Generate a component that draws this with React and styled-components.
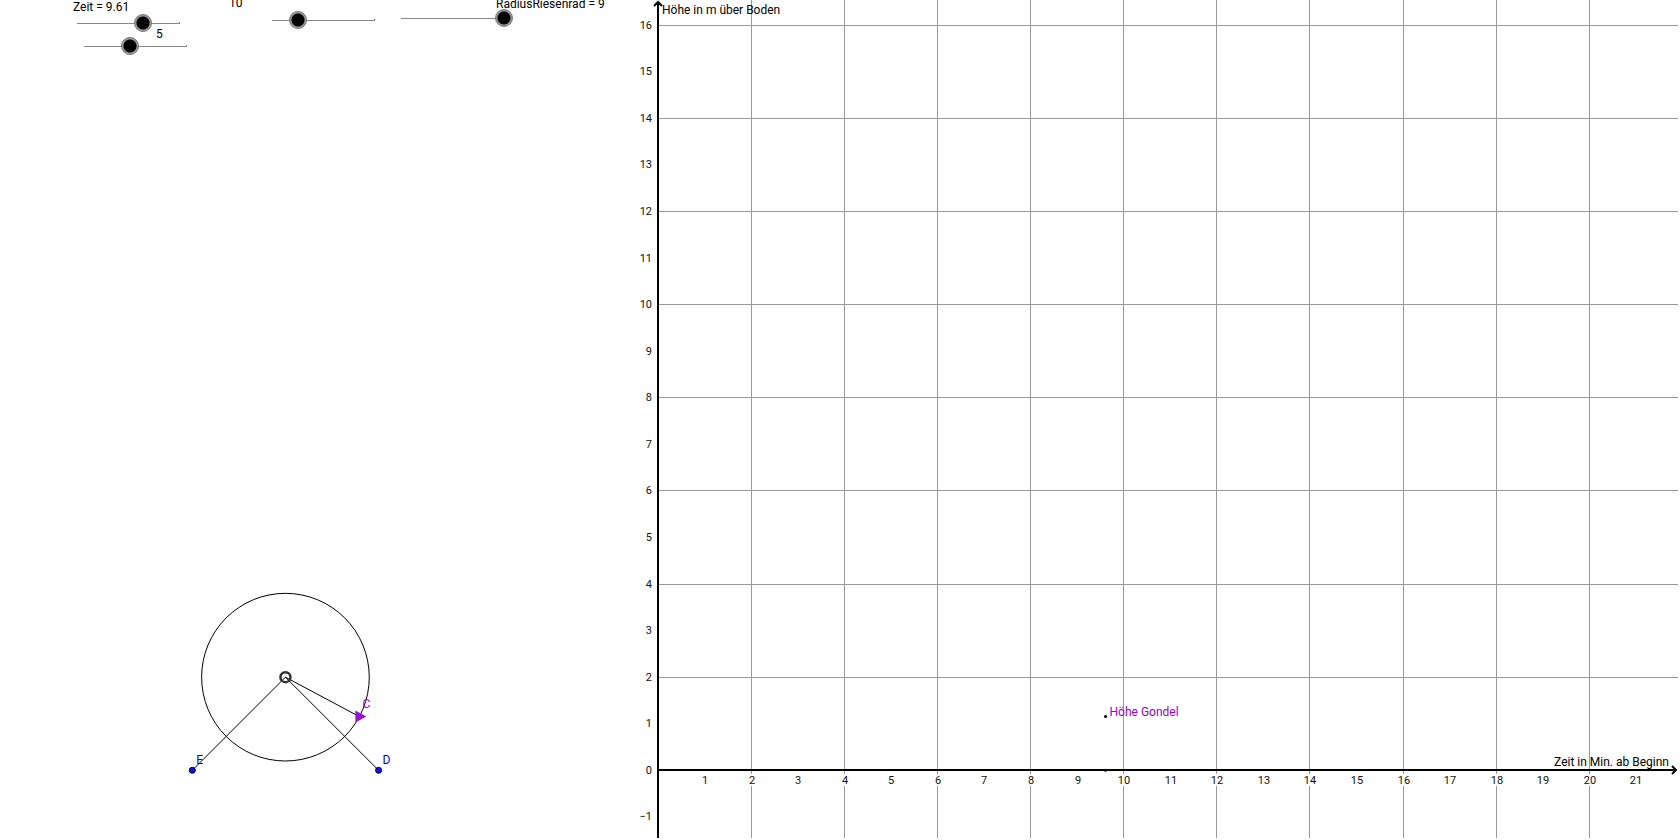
import { useEffect, useId, useState } from "react";
import styled, { createGlobalStyle } from "styled-components";

const UNIT = 46.57;
const ORIGIN = { x: 658, y: 770 };
const EDGE = 2;

const toX = (x) => ORIGIN.x + x * UNIT;
const toY = (y) => ORIGIN.y + 0.3 - y * UNIT;
const crisp = (v) => Math.floor(v) + 0.5;

const range = (from, to) =>
  Array.from({ length: Math.max(0, to - from + 1) }, (_, i) => from + i);

const useWindowSize = () => {
  const read = () => ({ width: window.innerWidth, height: window.innerHeight });
  const [size, setSize] = useState(read);

  useEffect(() => {
    const onResize = () => setSize(read());
    window.addEventListener("resize", onResize);
    return () => window.removeEventListener("resize", onResize);
  }, []);

  return size;
};

const GlobalStyle = createGlobalStyle`
  body {
    margin: 0;
    background-color: #fff;
    font-family: Roboto, "Liberation Sans", sans-serif;
  }
`;

const Board = styled.main`
  position: relative;
  height: 100vh;
  overflow: hidden;
`;

const Drawing = styled.svg`
  display: block;
  width: 100%;
  height: 100%;
`;

const GridLine = styled.line`
  stroke: #999;
`;

const AxisLine = styled.path`
  fill: none;
  stroke: #000;
  stroke-width: 2;
`;

const TickGap = styled.rect`
  fill: #fff;
`;

const Tick = styled.text`
  fill: #111;
  font-size: 11px;
`;

const Caption = styled.text`
  fill: ${(p) => p.$color || "#000"};
  font-size: 12px;
`;

const Rim = styled.circle`
  fill: none;
  stroke: #000;
`;

const Beam = styled.line`
  stroke: #000;
`;

const Hub = styled.circle`
  fill: none;
  stroke: #333;
  stroke-width: 2.5;
`;

const Foot = styled.circle`
  fill: #1010ff;
  stroke: #000;
`;

const Gondola = styled.path`
  fill: #9b0fcf;
`;

const TraceDot = styled.circle`
  fill: #000;
`;

const SliderLabel = styled.label`
  position: absolute;
  left: ${(p) => p.$place.x}px;
  top: ${(p) => p.$place.y}px;
  font-size: 12px;
  line-height: 16px;
  white-space: nowrap;
`;

const SliderInput = styled.input`
  position: absolute;
  left: ${(p) => p.$place.x - 9}px;
  top: ${(p) => p.$place.y - 9}px;
  width: 121px;
  height: 19px;
  margin: 0;
  appearance: none;
  background: none;

  &::-webkit-slider-runnable-track {
    height: 19px;
    background:
      linear-gradient(#888, #888) calc(100% - 9px) 8px / 1px 1px no-repeat,
      linear-gradient(#888, #888) center / calc(100% - 18px) 1px no-repeat;
  }

  &::-webkit-slider-thumb {
    appearance: none;
    box-sizing: border-box;
    width: 18px;
    height: 18px;
    border: 1px solid #777;
    border-radius: 50%;
    background: radial-gradient(circle, #000 6px, #999 7px);
  }
`;

const Slider = ({ text, value, onChange, min, max, step, place, labelPlace }) => {
  const id = useId();

  return (
    <>
      <SliderLabel htmlFor={id} $place={labelPlace}>
        {text}
      </SliderLabel>
      <SliderInput
        id={id}
        type="range"
        min={min}
        max={max}
        step={step}
        value={value}
        onChange={(e) => onChange(Number(e.target.value))}
        $place={place}
      />
    </>
  );
};

const Axes = ({ right, bottom }) => {
  const xTicks = range(1, Math.floor((right - 20 - ORIGIN.x) / UNIT));
  const yTicks = range(
    Math.ceil((ORIGIN.y - bottom + 6) / UNIT),
    Math.floor((ORIGIN.y - 10) / UNIT)
  );

  return (
    <g>
      {xTicks
        .filter((n) => n % 2 === 0)
        .map((n) => (
          <GridLine key={n} x1={crisp(toX(n))} x2={crisp(toX(n))} y1={0} y2={bottom} />
        ))}
      {yTicks
        .filter((n) => n % 2 === 0 && n !== 0)
        .map((n) => (
          <GridLine key={n} x1={ORIGIN.x} x2={right} y1={crisp(toY(n))} y2={crisp(toY(n))} />
        ))}

      {xTicks.map((n) => (
        <g key={n}>
          <TickGap x={toX(n) - 7} y={ORIGIN.y + 4} width={15} height={12} />
          <Tick x={Math.floor(toX(n)) + 1} y={ORIGIN.y + 14} textAnchor="middle">
            {n}
          </Tick>
        </g>
      ))}
      {yTicks.map((n) => (
        <Tick key={n} x={ORIGIN.x - 6} y={Math.floor(toY(n)) + 4} textAnchor="end">
          {String(n).replace("-", "−")}
        </Tick>
      ))}

      <AxisLine
        d={`M${ORIGIN.x} ${bottom}V2M${ORIGIN.x - 4} 6L${ORIGIN.x} 2L${ORIGIN.x + 4} 6`}
      />
      <AxisLine
        d={`M${ORIGIN.x} ${ORIGIN.y}H${right - 2}M${right - 6} ${ORIGIN.y - 4}L${right - 2} ${ORIGIN.y}L${right - 6} ${ORIGIN.y + 4}`}
      />

      <Caption x={ORIGIN.x + 4} y={14}>
        Höhe in m über Boden
      </Caption>
      <Caption x={right - 9} y={ORIGIN.y - 4} textAnchor="end">
        Zeit in Min. ab Beginn
      </Caption>
    </g>
  );
};

const Wheel = ({ hub, radius, gondola }) => {
  const center = { x: toX(hub.x), y: toY(hub.y) };
  const seat = { x: toX(gondola.x), y: toY(gondola.y) };
  const feet = [
    { name: "E", x: toX(hub.x - 2), y: toY(0) },
    { name: "D", x: toX(hub.x + 2), y: toY(0) },
  ];

  return (
    <g>
      <Rim cx={center.x} cy={center.y} r={radius * UNIT} />
      {feet.map((foot) => (
        <Beam key={foot.name} x1={center.x} y1={center.y} x2={foot.x} y2={foot.y} />
      ))}
      <Beam x1={center.x} y1={center.y} x2={seat.x} y2={seat.y} />
      <Hub cx={center.x} cy={center.y} r={5} />

      {feet.map((foot) => (
        <g key={foot.name}>
          <Foot cx={foot.x} cy={foot.y} r={3} />
          <Caption x={foot.x + 4} y={foot.y - 6} $color="#0000ff">
            {foot.name}
          </Caption>
        </g>
      ))}

      <Gondola d={`M${seat.x - 4} ${seat.y - 6}l11 6l-11 6z`} />
      <Caption x={seat.x + 3} y={seat.y - 9} $color="#9900cc">
        C
      </Caption>
    </g>
  );
};

const App = () => {
  const { width, height } = useWindowSize();
  const [time, setTime] = useState(9.61);
  const [period, setPeriod] = useState(5);
  const [hubHeight, setHubHeight] = useState(10);
  const [wheelRadius, setWheelRadius] = useState(9);

  // lengths are drawn at a fifth of their size
  const hub = { x: -8, y: hubHeight / 5 };
  const radius = wheelRadius / 5;
  const angle = (2 * Math.PI * time) / period;
  const gondola = {
    x: hub.x + radius * Math.cos(angle),
    y: hub.y + radius * Math.sin(angle),
  };

  return (
    <>
      <GlobalStyle />
      <Board>
        <Drawing>
          <Axes right={width - EDGE} bottom={height - EDGE} />
          <Wheel hub={hub} radius={radius} gondola={gondola} />
          <TraceDot cx={toX(time)} cy={toY(gondola.y)} r={1.5} />
          <TraceDot cx={toX(time)} cy={toY(0)} r={1.5} />
          <Caption x={toX(time) + 4} y={toY(gondola.y) - 1} $color="#9900cc">
            Höhe Gondel
          </Caption>
        </Drawing>

        <Slider
          text={`Zeit = ${time}`}
          value={time}
          onChange={setTime}
          min={0}
          max={15}
          step={0.01}
          place={{ x: 77, y: 23 }}
          labelPlace={{ x: 73, y: -1 }}
        />
        <Slider
          text={period}
          value={period}
          onChange={setPeriod}
          min={1}
          max={10}
          step={1}
          place={{ x: 84, y: 46 }}
          labelPlace={{ x: 156, y: 26 }}
        />
        <Slider
          text={hubHeight}
          value={hubHeight}
          onChange={setHubHeight}
          min={5}
          max={25}
          step={1}
          place={{ x: 272, y: 20 }}
          labelPlace={{ x: 229, y: -5 }}
        />
        <Slider
          text={`RadiusRiesenrad = ${wheelRadius}`}
          value={wheelRadius}
          onChange={setWheelRadius}
          min={1}
          max={9}
          step={1}
          place={{ x: 401, y: 18 }}
          labelPlace={{ x: 496, y: -4 }}
        />
      </Board>
    </>
  );
};

export default App;
